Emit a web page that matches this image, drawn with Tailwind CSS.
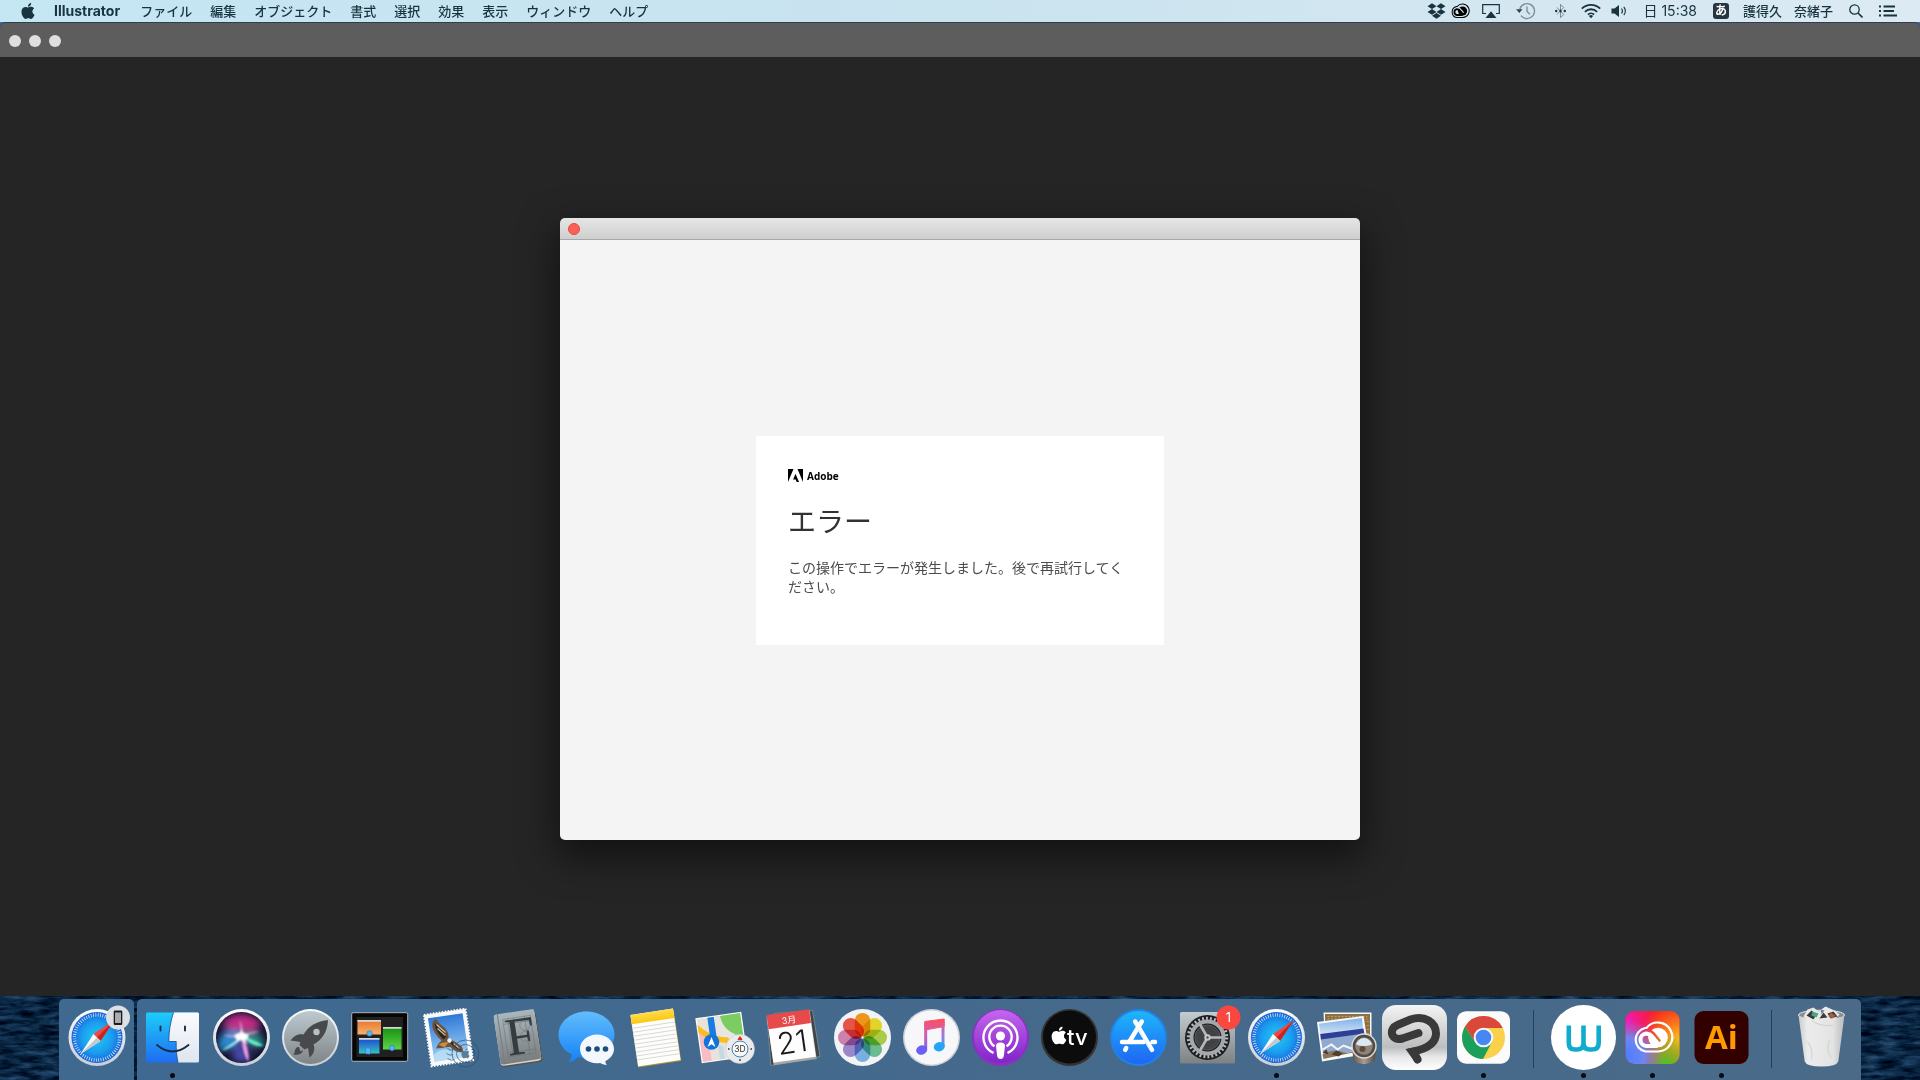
<!DOCTYPE html>
<html lang="ja">

<head>
  <meta charset="UTF-8" />
  <meta name="viewport" content="width=device-width, initial-scale=1.0" />
  <title>Illustrator</title>

  <!-- Tailwind CSS -->
  <script src="https://cdn.jsdelivr.net/npm/@tailwindcss/browser@4"></script>
</head>

<body class="min-h-screen flex flex-col overflow-hidden bg-[#3c6a99] font-['Inter','Noto_Sans_CJK_JP',sans-serif] text-[13px] text-[#17343f]">

  <!-- Shared shapes -->
  <svg class="absolute size-0" aria-hidden="true">
    <defs>
      <symbol id="apple" viewBox="0 0 24 24">
        <path d="M12.152 6.896c-.948 0-2.415-1.078-3.96-1.04-2.04.027-3.91 1.183-4.961 3.014-2.117 3.675-.546 9.103 1.519 12.09 1.013 1.454 2.208 3.09 3.792 3.039 1.52-.065 2.09-.987 3.935-.987 1.831 0 2.35.987 3.96.948 1.637-.026 2.676-1.48 3.676-2.948 1.156-1.688 1.636-3.325 1.662-3.415-.039-.013-3.182-1.221-3.22-4.857-.026-3.04 2.48-4.494 2.597-4.559-1.429-2.09-3.623-2.324-4.39-2.376-2-.156-3.675 1.09-4.61 1.09zM15.53 3.83c.843-1.012 1.4-2.427 1.245-3.83-1.207.052-2.662.805-3.532 1.818-.78.896-1.454 2.338-1.273 3.714 1.338.104 2.715-.688 3.559-1.701" fill="currentColor" />
      </symbol>
      <radialGradient id="safariBlue"><stop offset="0" stop-color="#22c9f3" /><stop offset=".6" stop-color="#1a9df0" /><stop offset="1" stop-color="#1b62d6" /></radialGradient>
      <linearGradient id="ring" x2="0" y2="1"><stop offset="0" stop-color="#fbfcfd" /><stop offset="1" stop-color="#c9ced4" /></linearGradient>
      <g id="safari">
        <circle r="28.500" fill="url(#ring)" />
        <circle r="25.500" fill="url(#safariBlue)" />
        <circle r="22.600" fill="none" stroke="#e5f5ff" stroke-width="3.400" stroke-dasharray=".7 1.67" />
        <path d="M17.500-17.500-3.500-3.500 3.500 3.500z" fill="#f4473d" />
        <path d="M17.500-17.500 0 0l3.500 3.500z" fill="#c9241f" />
        <path d="M-16.500 16.500-3.500-3.500 3.500 3.500z" fill="#fbfbfb" />
        <path d="M-16.500 16.500 0 0l3.500 3.500z" fill="#c3c9ce" />
      </g>
      <!-- Creative Cloud mark -->
      <mask id="ccCut">
        <rect x="-30" y="-30" width="60" height="60" fill="#fff" />
        <path d="M-7-7C-3-8 0-6 3-2L7 3" fill="none" stroke="#000" stroke-width="2.600" stroke-linecap="round" />
      </mask>
      <g id="cc">
        <path d="M-7 14A12 12 0 0 1-7.500-9.500L-6-9.600A14.500 14.500 0 1 1 6 14z" fill="none" stroke="currentColor" stroke-width="2.200" />
        <g mask="url(#ccCut)"><circle cx="5.500" cy="0" r="9.800" fill="currentColor" /></g>
        <path d="M4 8.500H-6.500A6.300 6.300 0 0 1-6.500-4C-4-4-2.500-3 0 0L4 5" fill="none" stroke="currentColor" stroke-width="4" stroke-linejoin="round" stroke-linecap="round" />
      </g>
    </defs>
  </svg>

  <!-- Menu bar -->
  <header class="flex items-center h-[22px] shrink-0 pl-5 pr-[23px] bg-linear-to-r from-[#c5e6f3] via-[#c9e3ef] to-[#dceaf3] whitespace-nowrap">
    <nav class="flex items-center gap-[18px] leading-[22px] font-medium">
      <button aria-label="アップル" class="-mt-px"><svg class="size-4"><use href="#apple" /></svg></button>
      <button class="mr-0.5 text-sm leading-[22px] font-bold">Illustrator</button>
      <button>ファイル</button>
      <button>編集</button>
      <button>オブジェクト</button>
      <button>書式</button>
      <button>選択</button>
      <button>効果</button>
      <button>表示</button>
      <button>ウィンドウ</button>
      <button>ヘルプ</button>
    </nav>

    <div class="flex items-center ml-auto leading-[22px]">
      <button aria-label="Dropbox"><svg class="w-[19px] h-[18px]" viewBox="0 0 24 24" fill="currentColor"><path d="M6 1.800 0 5.600l6 3.800 6-3.800zM18 1.800l-6 3.800 6 3.800 6-3.800zM0 13.300l6 3.800 6-3.800-6-3.900zM18 9.400l-6 3.900 6 3.800 6-3.800zM6 18.400l6 3.800 6-3.800-6-3.900z" /></svg></button>
      <button aria-label="Creative Cloud" class="ml-1 text-black"><svg class="w-5 h-4" viewBox="-21.500 -17 43 34"><use href="#cc" /></svg></button>
      <button aria-label="AirPlay" class="ml-3"><svg class="w-[18px] h-4" viewBox="0 0 18 16"><path d="M4 10.500H.7V1.700h16.600v8.800H14" fill="none" stroke="currentColor" stroke-width="1.200" /><path d="M9 8.300 14.500 15h-11z" fill="currentColor" /></svg></button>
      <button aria-label="Time Machine" class="ml-4 text-[#7b8a94]"><svg class="w-5 h-[18px]" viewBox="0 0 20 18"><path d="M3.700 7.500A7.500 7.500 0 1 1 5 13.600" fill="none" stroke="currentColor" stroke-width="1.300" /><path d="M0 7.300h6.500L3.300 11z" fill="#33434c" /><path d="M11 4.500V9.500l3 2.800" fill="none" stroke="currentColor" stroke-width="1.300" /></svg></button>
      <button aria-label="Bluetooth" class="ml-4.5 text-[#7b8a94]"><svg class="w-[13px] h-4" viewBox="0 0 13 16"><path d="M3 4.500 9.700 11.500 6.500 14.700V1.300L9.700 4.500 3 11.500" fill="none" stroke="currentColor" stroke-width="1" /><g fill="#22333c"><circle cx="2.200" cy="8" r="1.200" /><circle cx="6.500" cy="8" r="1.200" /><circle cx="10.800" cy="8" r="1.200" /></g></svg></button>
      <button aria-label="Wi-Fi" class="ml-3.5"><svg class="w-5 h-4" viewBox="0 0 20 16" fill="none" stroke="currentColor" stroke-width="1.800"><path d="M.8 5.600a13 13 0 0 1 18.400 0M3.900 8.800a8.600 8.600 0 0 1 12.200 0M6.900 11.700a4.400 4.400 0 0 1 6.200 0" /><path d="M10 15.300 7.900 13a3 3 0 0 1 4.200 0z" fill="currentColor" stroke="none" /></svg></button>
      <button aria-label="音量" class="ml-2.5"><svg class="w-[18px] h-3.5" viewBox="0 0 17 14"><path d="M0 4.500h3L7.500 1v12L3 9.500H0z" fill="currentColor" /><path d="M10 4.500a4 4 0 0 1 0 5M12.300 2.800a7 7 0 0 1 0 8.400" fill="none" stroke="currentColor" stroke-width="1.100" /></svg></button>
      <time class="ml-3.5 text-sm leading-[22px]">日 15:38</time>
      <button aria-label="入力ソース" class="ml-4 size-4 rounded-[3px] bg-[#263640] text-white text-[12px] leading-4 font-bold text-center">あ</button>
      <button class="ml-3.5 font-medium">護得久</button>
      <button class="ml-3 font-medium">奈緒子</button>
      <button aria-label="検索" class="ml-4"><svg class="size-3.5" viewBox="0 0 14 14" fill="none" stroke="currentColor" stroke-width="1.300"><circle cx="5.500" cy="5.500" r="4.700" /><path d="M9 9l4.500 4.500" stroke-width="1.600" /></svg></button>
      <button aria-label="通知センター" class="ml-4"><svg class="w-[18px] h-3" viewBox="0 0 18 12" stroke="currentColor" stroke-width="1.800"><path d="M0 1.500h2M0 6h2M0 10.500h2M4.500 1.500H16M4.500 6H15M4.500 10.500H18" /></svg></button>
    </div>
  </header>

  <!-- Application window -->
  <section class="flex-1 flex flex-col rounded-t-md border-t border-[#2b3f4f] bg-[#252525]">
    <div class="flex items-center gap-2 h-[34px] pt-0.5 pl-[9px] rounded-t-[5px] bg-[#5d5d5d]">
      <button aria-label="閉じる" class="size-3 rounded-full bg-[#dfdfdf]"></button>
      <button aria-label="しまう" class="size-3 rounded-full bg-[#dfdfdf]"></button>
      <button aria-label="拡大" class="size-3 rounded-full bg-[#dfdfdf]"></button>
    </div>

    <main class="flex-1 flex items-center justify-center pt-[5px]">
      <div role="dialog" aria-labelledby="error-title" class="w-[800px] rounded-[5px] overflow-hidden shadow-[0_14px_36px_4px_rgba(0,0,0,0.5)]">
        <div class="flex items-center h-[22px] pl-2 bg-linear-to-b from-[#e6e6e6] to-[#cfcfcf] border-b border-[#a8a8a8]">
          <button aria-label="閉じる" class="size-3 rounded-full bg-[#fc6058] border border-[#e14942]"></button>
        </div>
        <div class="flex items-center justify-center h-[600px] bg-[#f4f4f4]">
          <div class="w-[408px] h-[209px] bg-white p-8">
            <div class="flex items-center gap-1 h-4 text-black">
              <svg class="w-[15px] h-[13px]" viewBox="0 0 30 26" aria-hidden="true"><path d="M19 0h11v26zM11 0H0v26zM15 9.600 22 26h-4.600l-2.100-5.200h-5.100z" /></svg>
              <span class="font-['Open_Sans',sans-serif] text-[10px] leading-4 font-bold">Adobe</span>
            </div>
            <h1 id="error-title" class="mt-[18px] text-[28px] leading-10 text-[#323232] font-normal">エラー</h1>
            <p class="mt-4 text-sm leading-[19px] text-[#4b4b4b] font-normal">この操作でエラーが発生しました。後で再試行してください。</p>
          </div>
        </div>
      </div>
    </main>
  </section>

  <!-- Dock -->
  <footer class="relative h-[84px] shrink-0 flex items-end justify-center gap-[3px] bg-[#0a2440]">
    <svg class="absolute inset-0 w-full h-full" aria-hidden="true">
      <defs>
        <filter id="waves" x="0" y="0" width="100%" height="100%" color-interpolation-filters="sRGB">
          <feTurbulence type="fractalNoise" baseFrequency=".05 .2" numOctaves="4" seed="8" />
          <feColorMatrix values=".35 0 0 0 -.14  .45 0 0 0 -.08  .55 0 0 0 -.02  0 0 0 0 1" />
        </filter>
      </defs>
      <rect width="100%" height="100%" filter="url(#waves)" />
    </svg>

    <div class="relative h-[81px] w-[75px] rounded-t-[5px] bg-[#40698f] pt-1 pl-[3px]">
      <button aria-label="Safari Handoff">
        <svg class="size-[69px]" viewBox="-34.500 -34.500 69 69"><g transform="translate(.5)"><use href="#safari" /></g>
          <circle cx="21.500" cy="-20" r="12" fill="#dcdfe3" />
          <rect x="17.200" y="-27" width="8.600" height="14.500" rx="1.200" fill="#1c1c1e" /><rect x="18.500" y="-25" width="6" height="10.500" fill="#a9abae" />
        </svg>
      </button>
    </div>

    <div class="relative flex h-[81px] pl-px pr-[5px] pt-1 rounded-t-[5px] bg-linear-to-r from-[#3f6990] to-[#4a6a88]">

      <!-- Finder -->
      <button aria-label="Finder" class="flex flex-col items-center">
        <svg class="size-[69px]" viewBox="-34.500 -34.500 69 69">
          <defs><linearGradient id="fa" x2="0" y2="1"><stop offset="0" stop-color="#1ccdf9" /><stop offset="1" stop-color="#1f6cf2" /></linearGradient><linearGradient id="fb" x2="0" y2="1"><stop offset="0" stop-color="#fbfbfe" /><stop offset="1" stop-color="#dfe5ee" /></linearGradient></defs>
          <rect x="-26.500" y="-25" width="53" height="50" rx="1.500" fill="url(#fa)" />
          <path d="M1-25C-2-16-3.700-6-3.700 4H3.700C3.500 12 4.200 19 5.500 25H25a1.500 1.500 0 0 0 1.500-1.500V-23.500A1.500 1.500 0 0 0 25-25z" fill="url(#fb)" />
          <path d="M1-25C-2-16-3.700-6-3.700 4H3.700C3.500 12 4.200 19 5.500 25" fill="none" stroke="#1b4a86" stroke-width=".8" />
          <path d="M-12-11v4M12.500-11v4M-15.500 7.500Q0 20.500 16 7.500" fill="none" stroke="#172b45" stroke-width="1.900" stroke-linecap="round" />
        </svg>
        <span class="mt-px size-[5px] rounded-full bg-[#06090d]"></span>
      </button>

      <!-- Siri -->
      <button aria-label="Siri" class="flex flex-col items-center">
        <svg class="size-[69px]" viewBox="-34.500 -34.500 69 69">
          <defs><radialGradient id="sg"><stop offset="0" stop-color="#5a4a95" /><stop offset="1" stop-color="#10102c" /></radialGradient><filter id="b1" x="-50%" y="-50%" width="200%" height="200%"><feGaussianBlur stdDeviation="3.500" /></filter><filter id="b2" x="-50%" y="-50%" width="200%" height="200%"><feGaussianBlur stdDeviation=".8" /></filter><clipPath id="sc"><circle r="25.500" /></clipPath></defs>
          <circle r="28.500" fill="url(#ring)" /><circle r="25.500" fill="url(#sg)" />
          <g clip-path="url(#sc)">
            <g filter="url(#b1)"><path d="M-20-14Q0-32 20-14Q10-2 0-8Q-8-4-20-14" fill="#c32a86" /><path d="M-24 12Q-22-12 0-6Q-6 14-24 12" fill="#2b8fd0" /><path d="M2-4Q20-8 23 8Q10 12 2-2" fill="#1fa78d" opacity=".8" /><path d="M-6 2 10 24H-8z" fill="#4a4bb0" /></g>
            <g filter="url(#b2)"><path d="M1 0Q-10 5-20 13Q-9 11 1 0" fill="#8df3ee" /><path d="M0-2Q8 10 7 24Q1 18 0-2" fill="#ef9de4" /><path d="M0-2Q12 2 22 8Q12 11 0-2" fill="#6cf0c7" /><path d="M1-1Q10-7 18-6Q9-3 1-1M0 0Q-12-4-18-2Q-10 1 0 0M0 0Q3-12-2-17" fill="#f3a4d6" opacity=".7" /><ellipse rx="7" ry="4" cy="-1" fill="#fff" /><path d="M0-9 2-3 8-4 3 1 6 7 0 2-8 6-3 0-8-3-2-3z" fill="#fff" /></g>
          </g>
        </svg>
      </button>

      <!-- Launchpad -->
      <button aria-label="Launchpad" class="flex flex-col items-center">
        <svg class="size-[69px]" viewBox="-34.500 -34.500 69 69">
          <defs><linearGradient id="lg" x2="0" y2="1"><stop offset="0" stop-color="#bccacf" /><stop offset="1" stop-color="#7f8487" /></linearGradient></defs>
          <circle r="28.500" fill="url(#ring)" /><circle r="26.500" fill="url(#lg)" />
          <path d="M17.500-17.500C5-16-2-11-7-3C-13-4-17-1-20 3L-10 4.500C-11 6-11 7-10.500 8L-6 12L-2.500 10.500L-1 20C3 17 5 12 3 7C12 2 17-6 17.500-17.500z" fill="#48494c" /><circle cx="6" cy="-5.500" r="3.200" fill="#b7bfc3" />
          <path d="M-11.500 9.500C-16 9-15 14-17 17.500C-12 17-8 17-7.500 12.500L-10 14z" fill="#48494c" />
        </svg>
      </button>

      <!-- Mission Control -->
      <button aria-label="Mission Control" class="flex flex-col items-center">
        <svg class="size-[69px]" viewBox="-34.500 -34.500 69 69">
          <defs><linearGradient id="m1" x2="0" y2="1"><stop offset="0" stop-color="#e5762b" /><stop offset="1" stop-color="#f8b06c" /></linearGradient><linearGradient id="m2" x2="0" y2="1"><stop offset="0" stop-color="#1b45d0" /><stop offset="1" stop-color="#35c2c4" /></linearGradient><linearGradient id="m3" x2="0" y2="1"><stop offset="0" stop-color="#148f12" /><stop offset="1" stop-color="#5dd545" /></linearGradient></defs>
          <rect x="-27.800" y="-24.800" width="56" height="48.600" rx="1.500" fill="#060606" stroke="#a9b2bb" stroke-width="1" /><rect x="-23" y="-20.500" width="46.500" height="40" fill="#202020" />
          <path d="M-22-17.500H1.500V-3H-22z" fill="url(#m1)" /><path d="M-20.500.5H0V16H-20.500z" fill="url(#m2)" /><path d="M3.500-10.500H22V12H3.500z" fill="url(#m3)" />
          <path d="M-22-17.500H1.500v1.800H-22zM-20.500.5H0v1.800H-20.500zM3.500-10.500H22v1.800H3.500z" fill="#d8d8d8" />
          <g fill="#54b4f4" stroke="#1d6fb5" stroke-width=".5"><circle cx="-10" cy="-4" r="2.700" /><circle cx="12.500" cy="10.500" r="2.700" /><rect x="-12" y="12" width="5" height="6" transform="rotate(8)" rx=".5" /></g>
        </svg>
      </button>

      <!-- Mail -->
      <button aria-label="メール" class="flex flex-col items-center">
        <svg class="size-[69px]" viewBox="-34.500 -34.500 69 69">
          <defs><linearGradient id="ml" x2="0" y2="1"><stop offset="0" stop-color="#2e78d6" /><stop offset="1" stop-color="#a5d6f6" /></linearGradient></defs>
          <g transform="rotate(-8.500)">
            <rect x="-21" y="-26" width="42" height="52" fill="#fafafa" /><rect x="-21" y="-26" width="42" height="52" fill="none" stroke="#fafafa" stroke-width="2" stroke-dasharray="1.600 1.400" />
            <rect x="-17.500" y="-22" width="35" height="44" fill="url(#ml)" />
            <path d="M-17 15Q-8 8 2 14T17.500 14V22H-17.500z" fill="#c4e3f7" opacity=".7" />
          </g>
          <path d="M-13-19Q-18-15-15.500-8Q-12-1-7 3Q-11 6-12.500 11L-6 10.500Q-1 9 2 9.500Q7 15.500 14 14.500Q16 10 9 6Q4 2 0 2Q1-5-4-10Q-9-13-13-19z" fill="#6c5340" />
          <path d="M-14-14Q-13-6-5 2L-2-1Q-4-8-14-14M2 6Q7 11 13 13Q10 8 3 4z" fill="#2b241f" /><path d="M-12-13Q-8-9-3-5M-11-9-3-2M5 6 11 11" fill="none" stroke="#cbb79e" stroke-width="1.400" /><path d="M-10 7Q-5 4 0 5L-4 10z" fill="#c78f3f" /><circle cx="1" cy="3" r="2.200" fill="#f3efe8" />
          <g fill="none" stroke="#284d72" stroke-opacity=".65" stroke-width="1"><circle cx="17" cy="16" r="13.500" /><circle cx="17" cy="16" r="9" /><path d="M-1 11Q2 14 4 12M-2 16Q2 19 4 17M-1 21Q3 24 6 22" /></g>
          <use href="#apple" x="12" y="10.500" width="10" height="11" color="#274a6d" opacity=".65" />
        </svg>
      </button>

      <!-- Font Book -->
      <button aria-label="Font Book" class="flex flex-col items-center">
        <svg class="size-[69px]" viewBox="-34.500 -34.500 69 69">
          <defs><linearGradient id="fk" x2="0" y2="1"><stop offset="0" stop-color="#aab7bd" /><stop offset="1" stop-color="#7b7d7d" /></linearGradient></defs>
          <g transform="rotate(-8.500)">
            <rect x="-20" y="-24.500" width="41.500" height="52" rx="3" fill="#57534f" /><rect x="-20.500" y="-25" width="41" height="51" rx="3" fill="#d0d0cd" /><rect x="-20.500" y="-26" width="41" height="50.500" rx="2.500" fill="url(#fk)" />
            <path d="M-16.500-26V24.500" stroke="#727f86" stroke-width="1" />
            <g fill="none" stroke="#667278" stroke-width=".5"><rect x="-12" y="-20" width="28" height="38" /><path d="M-12-15H16M-12 14H16M-7-20V18M-1-20V18M10-20V18" /><circle cx="9" cy="-11" r="5" /><circle cx="8" cy="0" r="5" /></g>
            <text x="-12" y="17" font-family="Liberation Serif, serif" font-size="54" fill="#343c40">F</text>
          </g>
        </svg>
      </button>

      <!-- Messages -->
      <button aria-label="メッセージ" class="flex flex-col items-center">
        <svg class="size-[69px]" viewBox="-34.500 -34.500 69 69">
          <defs><linearGradient id="mg" x2="0" y2="1"><stop offset="0" stop-color="#62bdfd" /><stop offset="1" stop-color="#1482f6" /></linearGradient></defs>
          <path d="M0-26C15.500-26 28-15.500 28-3S15.500 20.500 0 20.500C-3 20.500-6 20-8.500 19.400C-11 22.500-14 24.500-18 24.800C-16 22-15 19.500-14.700 17C-23 13-28 5.500-28-3C-28-15.500-15.500-26 0-26z" fill="url(#mg)" />
          <path d="M10.500-3C20-3 27.500 3.600 27.500 11.500C27.500 16.500 24 21 19 23.500C18.500 25 19.500 26.500 20.500 27.500C17.500 27.300 15 26.300 13.500 25.500C2 27-6.500 20-6.500 11.500C-6.500 3.500 1-3 10.500-3z" fill="#f3f8fd" />
          <circle cx="2" cy="11.500" r="2.800" fill="#1c4d82" /><circle cx="10.500" cy="11.500" r="2.800" fill="#1c4d82" /><circle cx="19" cy="11.500" r="2.800" fill="#1c4d82" />
        </svg>
      </button>

      <!-- Notes -->
      <button aria-label="メモ" class="flex flex-col items-center">
        <svg class="size-[69px]" viewBox="-34.500 -34.500 69 69">
          <defs><linearGradient id="nt" x2="0" y2="1"><stop offset="0" stop-color="#ffdc4f" /><stop offset="1" stop-color="#fcc710" /></linearGradient></defs>
          <g transform="rotate(-8.500)"><rect x="-21.500" y="-25" width="43.500" height="52" fill="#b39333" /><rect x="-21.500" y="-26" width="43" height="52" fill="#fdfdfb" /><rect x="-21.500" y="-26" width="43" height="9.500" fill="url(#nt)" />
            <path d="M-21.500-12.500h43M-21.500-8.500h43M-21.500-4.500h43M-21.500-.5h43M-21.500 3.500h43M-21.500 7.500h43M-21.500 11.500h43M-21.500 15.500h43M-21.500 19.500h43" stroke="#d2d2cf" stroke-width=".8" /></g>
        </svg>
      </button>

      <!-- Maps -->
      <button aria-label="マップ" class="flex flex-col items-center">
        <svg class="size-[69px]" viewBox="-34.500 -34.500 69 69">
          <defs><clipPath id="mc"><rect x="-22" y="-21.500" width="44" height="43" /></clipPath></defs>
          <g transform="translate(-3 0) rotate(-8.200)"><rect x="-23.200" y="-22.700" width="46.400" height="45.400" fill="#fbfbf8" />
            <g clip-path="url(#mc)"><rect x="-22" y="-22" width="44" height="44" fill="#e8e3da" /><path d="M3-22H22V12Q2 4-2-22z" fill="#7ccd61" /><path d="M-3-22Q-2 0 22 7" fill="none" stroke="#e9e6e2" stroke-width="9" /><path d="M-22-10V22H-13V-4z" fill="#f7bcc4" /><path d="M-24-14Q-10 2 4 3L14 12" fill="none" stroke="#fbbd1b" stroke-width="5.500" /><path d="M-2 8V22M10 4V22" stroke="#c5d9e2" stroke-width="5" /><path d="M-8-22V6" stroke="#1a7be0" stroke-width="6.500" /></g>
          </g>
          <circle cx="-13" cy="4.500" r="7.800" fill="#1273dc" /><path d="M-13-.5-9 9.500-13 6.700-17 9.500z" fill="#fff" />
          <circle cx="15.500" cy="11.500" r="14.500" fill="#e9ebee" stroke="#c7cbd0" stroke-width=".5" /><circle cx="15.500" cy="11.500" r="8" fill="#f8f8f8" stroke="#4b7fa8" stroke-width="1" /><path d="M15.500-1 17.500 2h-4z" fill="#df2b22" stroke="#df2b22" stroke-width="1" /><path d="M3.500 11.500h1.500M26 11.500h1.500M15.500 21.500v2" stroke="#333" stroke-width="1.300" />
          <text x="15.500" y="14.600" text-anchor="middle" font-family="Inter, sans-serif" font-size="8.500" fill="#333">3D</text>
        </svg>
      </button>

      <!-- Calendar -->
      <button aria-label="カレンダー" class="flex flex-col items-center">
        <svg class="size-[69px]" viewBox="-34.500 -34.500 69 69">
          <path d="M-26.500-19-19-24 19-27 26.500 19-22.500 28z" fill="#3d4549" stroke="#98a1a5" stroke-width=".6" />
          <g transform="translate(-2.300 -1.500) rotate(-8.200)"><rect x="-21.500" y="-21.500" width="43.500" height="48" fill="#a5a5a2" /><rect x="-21.500" y="-22.500" width="43" height="46.500" fill="#fdfdfd" /><rect x="-21.500" y="-24" width="43" height="14" fill="#e64a4b" />
            <text x="0" y="-13" text-anchor="middle" font-family="Inter, 'Noto Sans CJK JP', sans-serif" font-size="9" fill="#fff">3月</text>
            <text x="0" y="17" text-anchor="middle" font-family="Inter, sans-serif" font-size="30" font-weight="300" fill="#181818">21</text></g>
        </svg>
      </button>

      <!-- Photos -->
      <button aria-label="写真" class="flex flex-col items-center">
        <svg class="size-[69px]" viewBox="-34.500 -34.500 69 69">
          <circle r="28.500" fill="#f2f3f5" />
          <g class="[&>rect]:mix-blend-multiply">
            <rect x="-7.800" y="-24.500" width="15.600" height="23.500" rx="7.800" fill="#f99d1c" />
            <rect x="-7.800" y="-24.500" width="15.600" height="23.500" rx="7.800" fill="#eddf2b" transform="rotate(45)" />
            <rect x="-7.800" y="-24.500" width="15.600" height="23.500" rx="7.800" fill="#b2d54a" transform="rotate(90)" />
            <rect x="-7.800" y="-24.500" width="15.600" height="23.500" rx="7.800" fill="#6fc596" transform="rotate(135)" />
            <rect x="-7.800" y="-24.500" width="15.600" height="23.500" rx="7.800" fill="#7fb8ea" transform="rotate(180)" />
            <rect x="-7.800" y="-24.500" width="15.600" height="23.500" rx="7.800" fill="#a28fd1" transform="rotate(225)" />
            <rect x="-7.800" y="-24.500" width="15.600" height="23.500" rx="7.800" fill="#d986b4" transform="rotate(270)" />
            <rect x="-7.800" y="-24.500" width="15.600" height="23.500" rx="7.800" fill="#f2594a" transform="rotate(315)" />
          </g>
        </svg>
      </button>

      <!-- Music -->
      <button aria-label="ミュージック" class="flex flex-col items-center">
        <svg class="size-[69px]" viewBox="-34.500 -34.500 69 69">
          <defs><linearGradient id="mu" gradientUnits="userSpaceOnUse" x1="0" y1="-18" x2="-4" y2="18"><stop offset="0" stop-color="#fb4f62" /><stop offset=".4" stop-color="#d25fb0" /><stop offset="1" stop-color="#6a63f4" /></linearGradient><linearGradient id="mv" gradientUnits="userSpaceOnUse" x1="0" y1="-18" x2="0" y2="14"><stop offset="0" stop-color="#fb4f62" /><stop offset=".45" stop-color="#a878da" /><stop offset="1" stop-color="#21a6f7" /></linearGradient></defs>
          <circle r="28.500" fill="#cdd1d7" /><circle r="27" fill="#f7f7fa" />
          <path d="M-6.700-16 12.700-18.500V-11L-6.700-7.500z" fill="url(#mu)" stroke="url(#mu)" stroke-width="1" stroke-linejoin="round" />
          <path d="M-5.800-15V11" stroke="url(#mu)" stroke-width="3" /><path d="M11.500-16V9" stroke="url(#mv)" stroke-width="3" />
          <ellipse cx="-9.800" cy="12.500" rx="5.600" ry="4.600" transform="rotate(-15 -9.800 12.500)" fill="#6b60f3" /><ellipse cx="7.800" cy="9.200" rx="5.600" ry="4.600" transform="rotate(-15 7.800 9.200)" fill="#27a5f5" />
        </svg>
      </button>

      <!-- Podcasts -->
      <button aria-label="ポッドキャスト" class="flex flex-col items-center">
        <svg class="size-[69px]" viewBox="-34.500 -34.500 69 69">
          <defs><linearGradient id="pc" x2="0" y2="1"><stop offset="0" stop-color="#c565ee" /><stop offset="1" stop-color="#8124c8" /></linearGradient></defs>
          <circle r="28.500" fill="#8c2fc4" /><circle r="26.500" cy="-1" fill="url(#pc)" />
          <g fill="none" stroke="#fff" stroke-width="2.400"><path d="M-7 15.500A17 17 0 1 1 7 15.500" /><path d="M-6 8.800A11.200 11.200 0 1 1 6 8.800" /></g>
          <circle cy="-1.500" r="4.600" fill="#fff" /><path d="M-4.500 8.500Q-4.500 5 0 5T4.500 8.500L3.300 18.500Q2.800 21.500 0 21.500T-3.300 18.500z" fill="#fff" />
        </svg>
      </button>

      <!-- TV -->
      <button aria-label="Apple TV" class="flex flex-col items-center">
        <svg class="size-[69px]" viewBox="-34.500 -34.500 69 69">
          <circle r="28.500" fill="#333" /><circle r="26.500" cy="-.5" fill="#0c0c0c" />
          <use href="#apple" x="-19.500" y="-11" width="18" height="18" color="#fff" />
          <text x="-2.500" y="7" font-family="Inter, sans-serif" font-size="22" font-weight="500" fill="#fff">tv</text>
        </svg>
      </button>

      <!-- App Store -->
      <button aria-label="App Store" class="flex flex-col items-center">
        <svg class="size-[69px]" viewBox="-34.500 -34.500 69 69">
          <defs><linearGradient id="as" x2="0" y2="1"><stop offset="0" stop-color="#1fb5fb" /><stop offset="1" stop-color="#1e66f3" /></linearGradient></defs>
          <circle r="28.500" fill="#2083e8" /><circle r="26.500" fill="url(#as)" />
          <g fill="none" stroke="#fff" stroke-width="4.500" stroke-linecap="round"><path d="M3.300-16-9 4M-12.300 10.500-13.300 12.300M-16.500 4.500H5M14 4.500H16.500M-3.300-16 13.500 12.300" /></g>
          <path d="M-1-9.500 11 11" stroke="#d6edfd" stroke-width="1" />
        </svg>
      </button>

      <!-- System Preferences -->
      <button aria-label="システム環境設定" class="flex flex-col items-center">
        <svg class="size-[69px]" viewBox="-34.500 -34.500 69 69">
          <defs><linearGradient id="sp" x2="0" y2="1"><stop offset="0" stop-color="#c3ccd2" /><stop offset="1" stop-color="#7d8182" /></linearGradient></defs>
          <rect x="-27.500" y="-25.500" width="55" height="51.500" rx="1.500" fill="url(#sp)" /><circle r="22.500" fill="#1d1e1f" />
          <circle r="19" fill="none" stroke="#b5b8ba" stroke-width="3.500" stroke-dasharray="1.900 2.076" /><circle r="16" fill="none" stroke="#a5a8aa" stroke-width="4" /><circle r="12.500" fill="#3f4143" stroke="#5b5e60" stroke-width="1" /><circle r="10" fill="none" stroke="#515456" stroke-width="1" stroke-dasharray="1 1" />
          <path d="M0 0H15M0 0-7.500-13M0 0-7.500 13" stroke="#b4b7b9" stroke-width="2.600" /><circle r="3.200" fill="#c6c8ca" /><circle r="1.200" fill="#555" />
          <circle cx="21" cy="-20" r="12" fill="#fa4740" /><text x="21" y="-15.500" text-anchor="middle" font-family="Inter, sans-serif" font-size="13" fill="#fff">1</text>
        </svg>
      </button>

      <!-- Safari -->
      <button aria-label="Safari" class="flex flex-col items-center">
        <svg class="size-[69px]" viewBox="-34.500 -34.500 69 69"><use href="#safari" /></svg>
        <span class="mt-px size-[5px] rounded-full bg-[#06090d]"></span>
      </button>

      <!-- Preview -->
      <button aria-label="プレビュー" class="flex flex-col items-center">
        <svg class="size-[69px]" viewBox="-34.500 -34.500 69 69">
          <defs><linearGradient id="pv" x2="0" y2="1"><stop offset="0" stop-color="#7fb2e8" /><stop offset="1" stop-color="#d6e6f5" /></linearGradient><linearGradient id="lp" x2="1" y2="0"><stop offset="0" stop-color="#5c5147" /><stop offset=".5" stop-color="#ac9d8d" /><stop offset="1" stop-color="#4b423a" /></linearGradient></defs>
          <path d="M-22-25H26V16H-20z" fill="#f7f7f4" /><path d="M-20.500-23.500H24.500V14H-20z" fill="#8c7144" /><path d="M-18-21h40M-18-18.500h40M18-16h6M18-12h6M18-8h6M18-4h6" stroke="#c09e62" stroke-width="1" stroke-dasharray="2 1.500" />
          <path d="M-28.500-15.500 18-21.500 24 16-23.500 24z" fill="#f8f9fa" /><path d="M-26.500-13.800 16.500-19.500 17.500-8-25-2.500z" fill="url(#pv)" /><path d="M-25.300-3.500 18-9 19-3-24.500 3z" fill="#2f3f95" /><path d="M-24.500 2 19-4 21 12-22 18z" fill="#8fa9cf" /><path d="M-23 17Q-12 11-4 14T12 11L21 12-22 21.500z" fill="#8e765a" /><path d="M-23 12 -14 7-8 12-2 8 6 11 12 6" fill="none" stroke="#f1f6fa" stroke-width="2" /><path d="M-14 17l5-4 6 3-4 3zM-23 15l4-3 2 5z" fill="#4e3d31" />
          <path d="M6.500 9.500 8 23.500Q18 30 29 23.500L31 9.500z" fill="url(#lp)" /><circle cx="18.500" cy="8.500" r="12" fill="#4e4b49" stroke="#d9d9d9" stroke-width="1.500" /><circle cx="18.500" cy="8.500" r="8.800" fill="#918375" /><path d="M10.500 7A8.200 8.200 0 0 1 26.500 7Q18 10 10.500 7z" fill="#dde9f1" /><circle cx="17" cy="11.500" r="3" fill="#5d4b3d" />
        </svg>
      </button>

      <!-- Clip Studio Paint -->
      <button aria-label="CLIP STUDIO PAINT" class="flex flex-col items-center">
        <svg class="size-[69px]" viewBox="-34.500 -34.500 69 69">
          <defs><linearGradient id="cs" x2="0" y2="1"><stop offset="0" stop-color="#f4f4f4" /><stop offset=".65" stop-color="#bcbdbe" /><stop offset=".8" stop-color="#e8e8e8" /><stop offset="1" stop-color="#fff" /></linearGradient></defs>
          <rect x="-32.500" y="-32.500" width="65" height="65" rx="14" fill="url(#cs)" />
          <path d="M4-4.500-12 1C-24 4-26-9-17-12.500L-4-18C10-23 21.500-15 21.500-4C21.500 6 13 11-1 14L3 22" fill="none" stroke="#39393a" stroke-width="8" stroke-linecap="round" />
          <path d="M-9 11.500 0 10 7 21 1 25.500z" fill="#39393a" />
        </svg>
      </button>

      <!-- Chrome -->
      <button aria-label="Google Chrome" class="flex flex-col items-center">
        <svg class="size-[69px]" viewBox="-34.500 -34.500 69 69">
          <rect x="-26.500" y="-26.300" width="53" height="52.500" rx="9" fill="#fbfbfb" />
          <circle r="21.500" fill="#fbd04a" />
          <path d="M-18.600-10.700A21.500 21.500 0 0 1 19.200-9.600H0L-8.300 4.800z" fill="#d9483b" />
          <path d="M-18.600-10.700A21.500 21.500 0 0 0-.5 21.500L8.300 4.800 0 0-8.300 4.800z" fill="#1aa05c" />
          <circle r="9.800" fill="#f4f6f8" /><circle r="7.800" fill="#4687f4" />
        </svg>
        <span class="mt-px size-[5px] rounded-full bg-[#06090d]"></span>
      </button>

      <div class="w-px mx-[15px] mt-[7px] mb-3 bg-[#233f5e]"></div>

      <!-- Wacom -->
      <button aria-label="Wacom" class="flex flex-col items-center">
        <svg class="size-[69px]" viewBox="-34.500 -34.500 69 69">
          <circle r="32.500" fill="#fff" /><path d="M-14.700-12V5.500Q-14.700 12-8.500 12H-6.500Q0 12 0 5.500V-12M0 5.500Q0 12 6.500 12H8.500Q15.200 12 15.200 5.500V-12" fill="none" stroke="#11accd" stroke-width="4.600" />
        </svg>
        <span class="mt-px size-[5px] rounded-full bg-[#06090d]"></span>
      </button>

      <!-- Creative Cloud -->
      <button aria-label="Creative Cloud" class="flex flex-col items-center text-white">
        <svg class="size-[69px]" viewBox="-34.500 -34.500 69 69">
          <defs>
            <radialGradient id="k1" cx="0" cy=".2" r=".6"><stop offset="0" stop-color="#f01ac0" /><stop offset="1" stop-color="#f01ac0" stop-opacity="0" /></radialGradient>
            <radialGradient id="k2" cx="1" cy=".55" r=".75"><stop offset="0" stop-color="#fcc51c" /><stop offset="1" stop-color="#fcb11c" stop-opacity="0" /></radialGradient>
            <radialGradient id="k3" cx=".75" cy="1" r=".6"><stop offset="0" stop-color="#46c728" /><stop offset="1" stop-color="#6fca24" stop-opacity="0" /></radialGradient>
            <radialGradient id="k4" cx="0" cy=".85" r=".7"><stop offset="0" stop-color="#4a7dff" /><stop offset=".5" stop-color="#6f86f0" /><stop offset="1" stop-color="#a06fe0" stop-opacity="0" /></radialGradient>
          </defs>
          <rect x="-27" y="-26.500" width="54" height="53" rx="9" fill="#f61d1c" /><rect x="-27" y="-26.500" width="54" height="53" rx="9" fill="url(#k2)" /><rect x="-27" y="-26.500" width="54" height="53" rx="9" fill="url(#k1)" /><rect x="-27" y="-26.500" width="54" height="53" rx="9" fill="url(#k3)" /><rect x="-27" y="-26.500" width="54" height="53" rx="9" fill="url(#k4)" />
          <use href="#cc" />
        </svg>
        <span class="mt-px size-[5px] rounded-full bg-[#06090d]"></span>
      </button>

      <!-- Illustrator -->
      <button aria-label="Adobe Illustrator" class="flex flex-col items-center">
        <svg class="size-[69px]" viewBox="-34.500 -34.500 69 69">
          <rect x="-27" y="-26.500" width="54" height="53" rx="9" fill="#330000" />
          <text x="0" y="11.500" text-anchor="middle" font-family="Open Sans, sans-serif" font-size="33" font-weight="700" fill="#ff9a00">Ai</text>
        </svg>
        <span class="mt-px size-[5px] rounded-full bg-[#06090d]"></span>
      </button>

      <div class="w-px mx-[15px] mt-[7px] mb-3 bg-[#233f5e]"></div>

      <!-- Trash -->
      <button aria-label="ゴミ箱" class="flex flex-col items-center">
        <svg class="size-[69px]" viewBox="-34.500 -34.500 69 69">
          <defs><linearGradient id="tr" x2="1" y2="0"><stop offset="0" stop-color="#c9cbcd" /><stop offset=".2" stop-color="#ececec" /><stop offset=".75" stop-color="#e3e3e3" /><stop offset="1" stop-color="#b8babc" /></linearGradient></defs>
          <ellipse cy="-22.500" rx="23" ry="4.800" fill="#8b8e90" stroke="#e8e9ea" stroke-width="1" />
          <path d="M-18-21-14-28-8-30-3-26 4-31 13-27 18-23 12-17H-14z" fill="#e9e9e6" /><path d="M-15-22-10-27-5-23-8-18zM6-24l6-2 4 5-7 2zM-2-19 2-25l4 5z" fill="#3b3b3d" /><path d="M-9-26l6 2-2 4-5-2z" fill="#49a886" /><path d="M9-25l5 3-3 3-4-2z" fill="#a85d3c" /><path d="M-1-28l4 1-3 4z" fill="#727ea8" />
          <path d="M-23-22.500C-18-16 18-16 23-22.500L16.800 24Q15 29 0 29T-16.800 24z" fill="url(#tr)" />
          <path d="M-10-17Q-2-11 12-12M-14 4Q-8 12-10 22M8 2Q4 14 10 20" fill="none" stroke="#cfd0d1" stroke-width="1" />
        </svg>
      </button>
    </div>
  </footer>
</body>

</html>
